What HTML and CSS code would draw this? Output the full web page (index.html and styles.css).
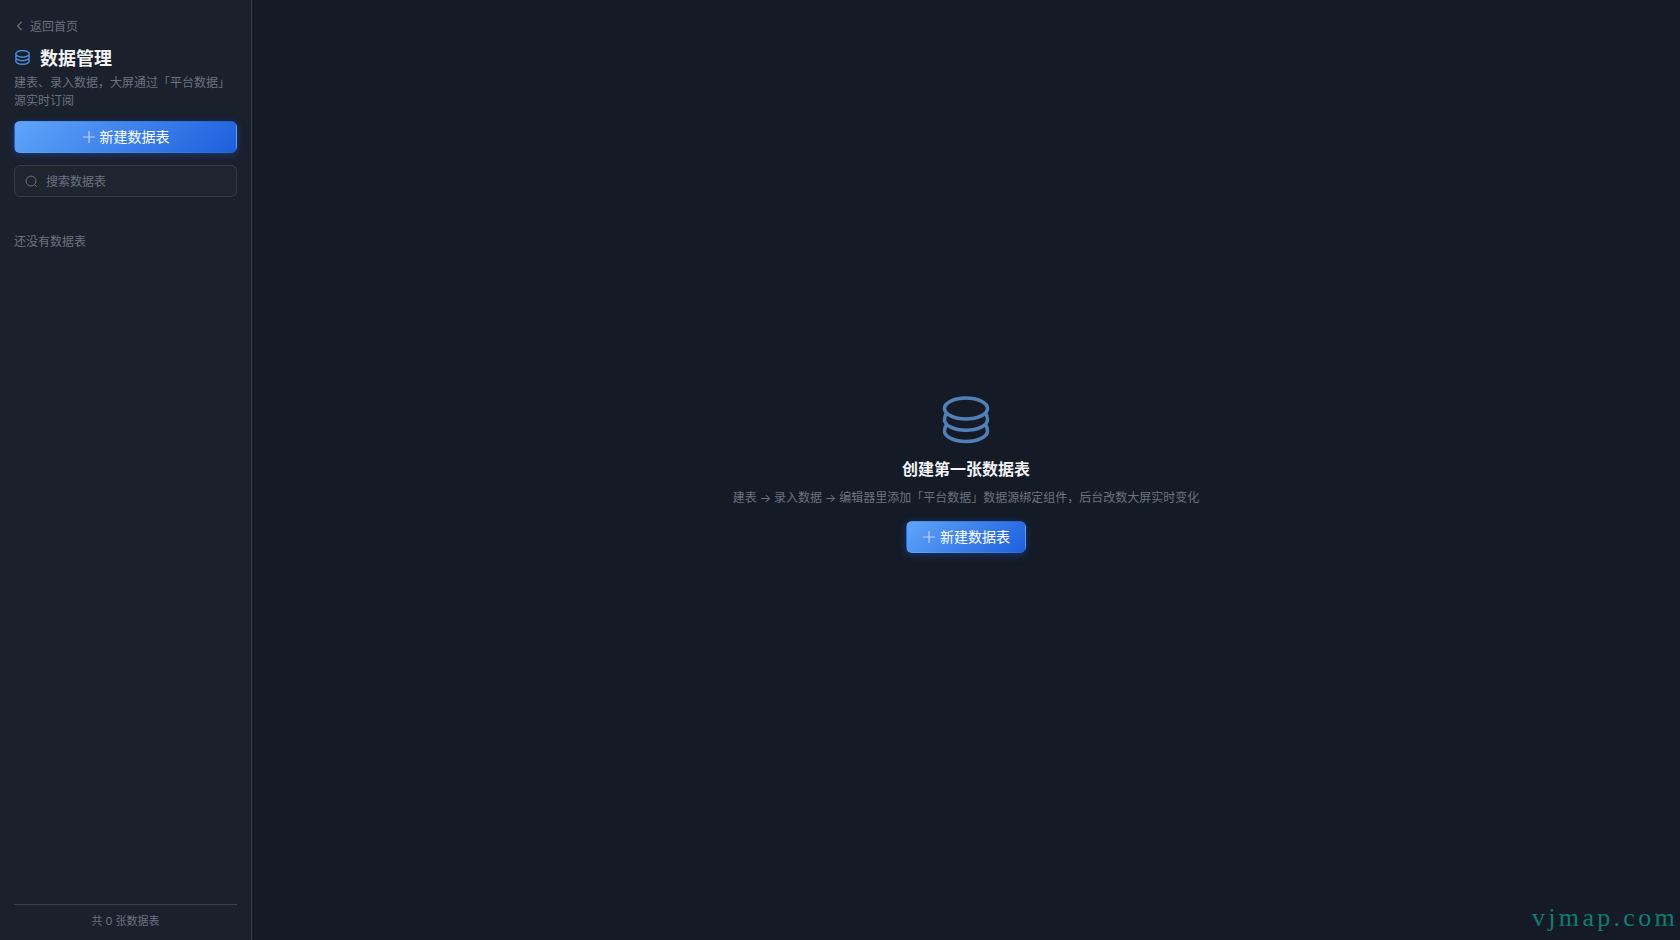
FILE: index.html
```html
<!DOCTYPE html>
<html lang="zh-CN">
<head>
<meta charset="utf-8">
<title>数据管理</title>
<link rel="stylesheet" href="styles.css">
</head>
<body>
<div class="app">
  <aside class="sidebar">
    <a class="back"><svg class="back-icon" viewBox="0 0 12 12"><path d="M7.500 2 L3.500 6 L7.500 10"/></svg><span class="lift">返回首页</span></a>
    <div class="title-row">
      <svg class="db-icon" viewBox="0 0 48 48"><ellipse cx="24" cy="12.500" rx="21.500" ry="10.500"/><path d="M4.500 17.500C3.200 19 2.500 20.800 2.500 23.700c0 5.800 9.600 10.500 21.500 10.500s21.500-4.700 21.500-10.500c0-2.900-.7-4.700-2-6.200"/><path d="M4.500 28.800C3.200 30.300 2.500 32.100 2.500 35c0 5.800 9.600 10.500 21.500 10.500S45.500 40.800 45.500 35c0-2.900-.7-4.700-2-6.200"/></svg>
      <h1>数据管理</h1>
    </div>
    <p class="desc">建表、录入数据，大屏通过「平台数据」源实时订阅</p>
    <button class="btn btn-wide"><svg class="plus" viewBox="0 0 14 14"><path d="M7 1v12M1 7h12"/></svg><span class="lift">新建数据表</span></button>
    <div class="search">
      <svg class="search-icon" viewBox="0 0 14 14"><circle cx="6.500" cy="6.500" r="5.300"/><path d="M10.400 10.400l2.300 2.300"/></svg>
      <span class="lift">搜索数据表</span>
    </div>
    <div class="empty-list">还没有数据表</div>
    <div class="foot">共 0 张数据表</div>
  </aside>
  <main class="main">
    <svg class="hero-icon" viewBox="0 0 48 48"><ellipse cx="24" cy="12.500" rx="21.500" ry="10.500"/><path d="M4.500 17.500C3.200 19 2.500 20.800 2.500 23.700c0 5.800 9.600 10.500 21.500 10.500s21.500-4.700 21.500-10.500c0-2.900-.7-4.700-2-6.200"/><path d="M4.500 28.800C3.200 30.300 2.500 32.100 2.500 35c0 5.800 9.600 10.500 21.500 10.500S45.500 40.800 45.500 35c0-2.900-.7-4.700-2-6.200"/></svg>
    <h2>创建第一张数据表</h2>
    <p class="hint">建表 → 录入数据 → 编辑器里添加「平台数据」数据源绑定组件，后台改数大屏实时变化</p>
    <button class="btn btn-main"><svg class="plus" viewBox="0 0 14 14"><path d="M7 1v12M1 7h12"/></svg><span class="lift">新建数据表</span></button>
  </main>
</div>
<div class="watermark">vjmap.com</div>
</body>
</html>
```
FILE: styles.css
```css
* { box-sizing: border-box; }
html, body { margin: 0; height: 100%; }
body {
  background: #141b26;
  font-family: Inter, "Noto Sans CJK SC", sans-serif;
  overflow: hidden;
}
.app { display: flex; height: 940px; }
.lift { padding-bottom: 2px; }
.sidebar {
  width: 252px;
  flex: none;
  background: #1a202c;
  border-right: 1px solid #3a404c;
  padding: 17px 14px 0;
  display: flex;
  flex-direction: column;
}
.back {
  display: flex;
  align-items: center;
  gap: 4px;
  height: 18px;
  font-size: 12px;
  color: #6b7280;
}
.back-icon { width: 12px; height: 12px; fill: none; stroke: #6b7280; stroke-width: 1.100; }
.title-row { display: flex; align-items: center; gap: 10px; margin-top: 12px; height: 24px; padding-left: 1px; }
.db-icon { width: 15px; height: 15px; margin-bottom: 4px; fill: none; stroke: #4a90e2; stroke-width: 4.500; }
h1 { margin: 0; font-size: 18px; font-weight: 700; color: #f3f4f6; line-height: 24px; }
.desc { margin: 3px 0 0; font-size: 12px; line-height: 18px; color: #6b7280; }
.btn {
  display: flex;
  align-items: center;
  justify-content: center;
  gap: 4px;
  height: 32px;
  border: 1px solid transparent;
  border-radius: 6px;
  padding: 0;
  background: linear-gradient(135deg, #60a5fa 0%, #1d5fdc 100%);
  box-shadow: 0 2px 8px rgba(37, 99, 235, 0.35);
  color: #fff;
  font-family: inherit;
  font-size: 14px;
}
.btn-wide { width: 223px; margin-top: 11px; }
.plus { width: 14px; height: 14px; fill: none; stroke: #bcd4f5; stroke-width: 1.200; }
.search {
  display: flex;
  align-items: center;
  gap: 8px;
  width: 223px;
  height: 32px;
  margin-top: 12px;
  padding: 0 10px;
  background: #1f252f;
  border: 1px solid #353b47;
  border-radius: 6px;
  font-size: 12px;
  color: #6b7280;
}
.search-icon { width: 13px; height: 13px; fill: none; stroke: #6b7280; stroke-width: 1; }
.empty-list { margin-top: 36px; font-size: 12px; line-height: 18px; color: #6b7280; }
.foot {
  margin-top: auto;
  width: 223px;
  height: 36px;
  border-top: 1px solid #3a404c;
  font-size: 11px;
  line-height: 33px;
  text-align: center;
  color: #6b7280;
}
.main {
  flex: 1;
  display: flex;
  flex-direction: column;
  align-items: center;
  padding-top: 396px;
}
.hero-icon { width: 48px; height: 48px; fill: none; stroke: #5180b8; stroke-width: 3.500; }
h2 { margin: 13px 0 0; font-size: 16px; font-weight: 700; line-height: 24px; color: #f3f4f6; }
.hint { margin: 5px 0 0; font-size: 12px; line-height: 24px; color: #6b7280; word-spacing: -0.5px; }
.btn-main { width: 120px; margin-top: 11px; }
.watermark {
  position: absolute;
  right: 2px;
  bottom: 7px;
  font-family: "Liberation Serif", serif;
  font-size: 26px;
  line-height: 30px;
  letter-spacing: 3.300px;
  color: #0f7d72;
}
```
